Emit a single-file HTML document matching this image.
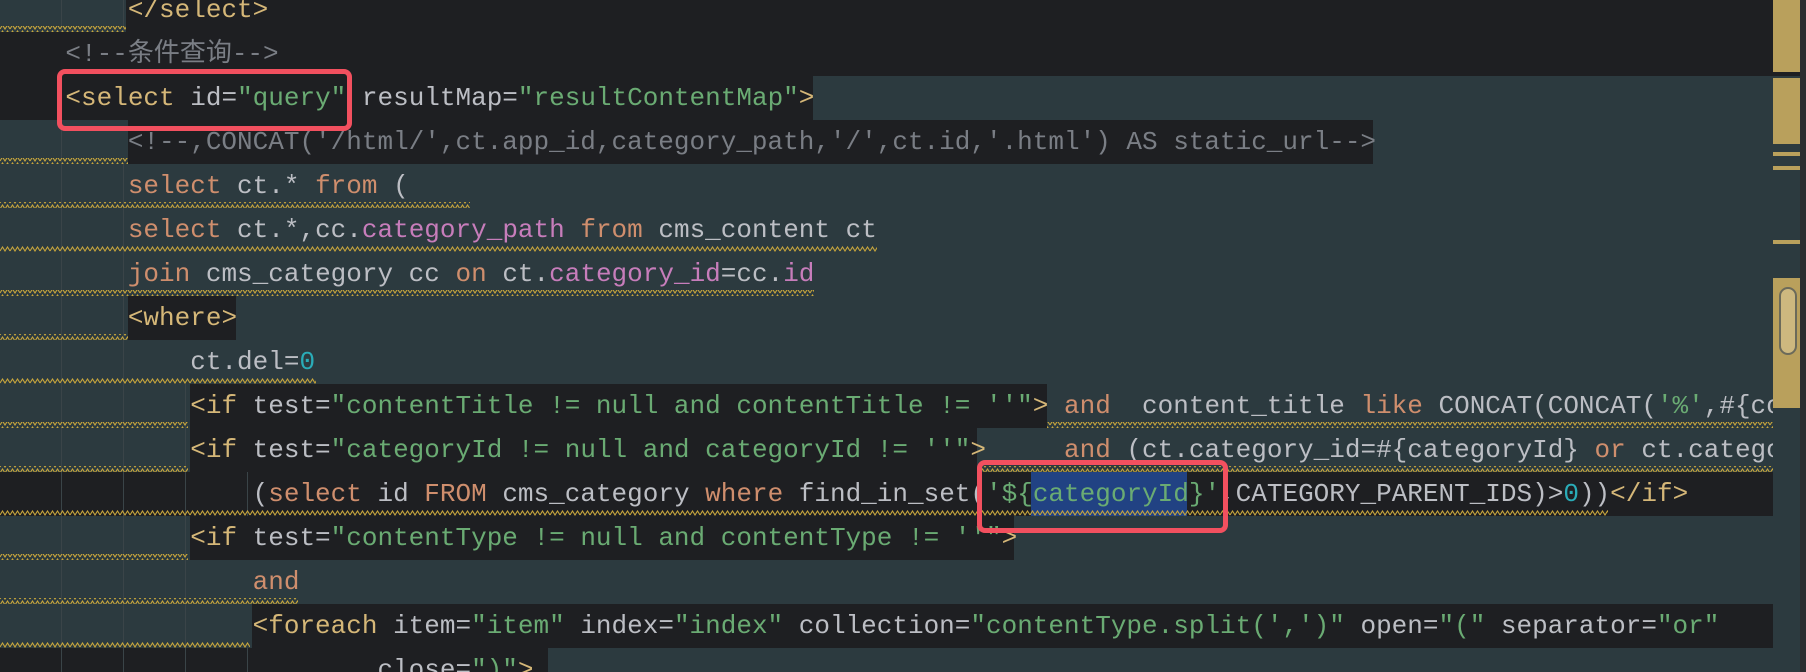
<!DOCTYPE html>
<html><head><meta charset="utf-8"><style>
*{margin:0;padding:0}
body{width:1806px;height:672px;overflow:hidden;background:#1e1f22;position:relative;font-family:"Liberation Mono","Noto Sans CJK SC",monospace;font-size:26px}
.bg{position:absolute;height:44px}
.t{background:#2c3a3f}
.d{background:#1e1f22}
#code{position:absolute;left:0;top:0;width:1800px;height:672px;overflow:hidden}
.ln{position:absolute;left:3px;height:44px;line-height:44px;white-space:pre;color:#bcbec4}
.g{position:absolute;width:1px;background:#3a4448}
.k{color:#d5b778}.s{color:#6aab73}.c{color:#7a7e85}.o{color:#cf8e6d}.p{color:#c77dbb}.n{color:#2aacb8}
.sel{background:#214283}
.box{position:absolute;border:5px solid #f2505f;border-radius:8px}
.m{position:absolute;left:1773px;width:27px;background:#b9a05c}
</style></head><body>
<svg width="0" height="0" style="position:absolute"><defs><pattern id="wv" width="10" height="6" patternUnits="userSpaceOnUse"><path d="M0 5 L2.5 1 L5 5 L7.5 1 L10 5" fill="none" stroke="#c8a63c" stroke-width="1.1"/></pattern></defs></svg>

<div id="code">
<div class="bg t" style="top:-12px;left:0;width:126px"></div>
<div class="bg t" style="top:76px;left:813px;width:987px"></div>
<div class="bg t" style="top:120px;left:0;width:128px"></div>
<div class="bg t" style="top:120px;left:1373px;width:427px"></div>
<div class="bg t" style="top:164px;left:0;width:1800px;height:132px"></div>
<div class="bg t" style="top:296px;left:0;width:128px"></div>
<div class="bg t" style="top:296px;left:236px;width:1564px"></div>
<div class="bg t" style="top:340px;left:0;width:1800px"></div>
<div class="bg t" style="top:384px;left:0;width:190px;height:88px"></div>
<div class="bg t" style="top:384px;left:1047px;width:753px"></div>
<div class="bg t" style="top:428px;left:977px;width:823px"></div>
<div class="bg t" style="top:516px;left:0;width:190px"></div>
<div class="bg t" style="top:516px;left:1014px;width:786px"></div>
<div class="bg t" style="top:560px;left:0;width:1800px"></div>
<div class="bg t" style="top:604px;left:0;width:252px"></div>
<div class="bg t" style="top:648px;left:548px;width:1252px"></div>

<div class="g" style="left:61px;top:-12px;height:44px"></div>
<div class="g" style="left:61px;top:120px;height:552px"></div>
<div class="g" style="left:123px;top:-12px;height:44px"></div>
<div class="g" style="left:123px;top:164px;height:508px"></div>
<div class="g" style="left:185px;top:384px;height:288px"></div>
<div class="g" style="left:247px;top:472px;height:44px"></div>
<div class="g" style="left:247px;top:648px;height:24px"></div>

<div class="bg sel" style="top:472px;left:1031px;width:156px"></div>

<svg style="position:absolute;left:0;top:0" width="1800" height="672">
<g fill="url(#wv)">
<rect x="0" y="26" width="126" height="6"/>
<rect x="0" y="158" width="128" height="6"/>
<rect x="0" y="202" width="470" height="6"/>
<rect x="0" y="246" width="877" height="6"/>
<rect x="0" y="290" width="814" height="6"/>
<rect x="0" y="334" width="128" height="6"/>
<rect x="0" y="378" width="316" height="6"/>
<rect x="0" y="422" width="188" height="6"/>
<rect x="1047" y="422" width="753" height="6"/>
<rect x="0" y="466" width="188" height="6"/>
<rect x="977" y="466" width="823" height="6"/>
<rect x="0" y="510" width="1608" height="6"/>
<rect x="0" y="554" width="188" height="6"/>
<rect x="0" y="598" width="298" height="6"/>
<rect x="0" y="642" width="250" height="6"/>
</g></svg>

<div class="ln" style="top:-12px">        <span class="k">&lt;/select&gt;</span></div>
<div class="ln c" style="top:32px">    &lt;!--条件查询--&gt;</div>
<div class="ln" style="top:76px">    <span class="k">&lt;select</span> id=<span class="s">"query"</span> resultMap=<span class="s">"resultContentMap"</span><span class="k">&gt;</span></div>
<div class="ln c" style="top:120px">        &lt;!--,CONCAT('/html/',ct.app_id,category_path,'/',ct.id,'.html') AS static_url--&gt;</div>
<div class="ln" style="top:164px">        <span class="o">select</span> ct.* <span class="o">from</span> (</div>
<div class="ln" style="top:208px">        <span class="o">select</span> ct.*,cc.<span class="p">category_path</span> <span class="o">from</span> cms_content ct</div>
<div class="ln" style="top:252px">        <span class="o">join</span> cms_category cc <span class="o">on</span> ct.<span class="p">category_id</span>=cc.<span class="p">id</span></div>
<div class="ln" style="top:296px">        <span class="k">&lt;where&gt;</span></div>
<div class="ln" style="top:340px">            ct.del=<span class="n">0</span></div>
<div class="ln" style="top:384px">            <span class="k">&lt;if</span> test=<span class="s">"contentTitle != null and contentTitle != ''"</span><span class="k">&gt;</span> <span class="o">and</span>  content_title <span class="o">like</span> CONCAT(CONCAT(<span class="s">'%'</span>,#{contentTitle}),<span class="s">'%'</span>)</div>
<div class="ln" style="top:428px">            <span class="k">&lt;if</span> test=<span class="s">"categoryId != null and categoryId != ''"</span><span class="k">&gt;</span>     <span class="o">and</span> (ct.category_id=#{categoryId} <span class="o">or</span> ct.category_path like</div>
<div class="ln" style="top:472px">                (<span class="o">select</span> id <span class="o">FROM</span> cms_category <span class="o">where</span> find_in_set(<span class="s">'${categoryId}'</span>,CATEGORY_PARENT_IDS)&gt;<span class="n">0</span>))<span class="k">&lt;/if&gt;</span></div>
<div class="ln" style="top:516px">            <span class="k">&lt;if</span> test=<span class="s">"contentType != null and contentType != ''"</span><span class="k">&gt;</span></div>
<div class="ln" style="top:560px">                <span class="o">and</span></div>
<div class="ln" style="top:604px">                <span class="k">&lt;foreach</span> item=<span class="s">"item"</span> index=<span class="s">"index"</span> collection=<span class="s">"contentType.split(',')"</span> open=<span class="s">"("</span> separator=<span class="s">"or"</span></div>
<div class="ln" style="top:648px">                        close=<span class="s">")"</span><span class="k">&gt;</span></div>
</div>

<div style="position:absolute;left:1773px;top:0;width:33px;height:672px;background:#1e1f22"></div>
<div style="position:absolute;left:1773px;top:76px;width:27px;height:596px;background:#2c3a3f"></div>
<div style="position:absolute;left:1800px;top:0;width:6px;height:672px;background:#2b2d30"></div>
<div class="m" style="top:0;height:72px"></div>
<div class="m" style="top:78px;height:66px"></div>
<div class="m" style="top:152px;height:4px"></div>
<div class="m" style="top:166px;height:4px"></div>
<div class="m" style="top:240px;height:4px"></div>
<div class="m" style="top:278px;height:130px"></div>
<div style="position:absolute;left:1779px;top:287px;width:14px;height:64px;border:2px solid #6b6a5a;border-radius:9px;background:#cdb87f"></div>

<div class="box" style="left:57px;top:69px;width:285px;height:52px"></div>
<div class="box" style="left:977px;top:460px;width:241px;height:63px"></div>
</body></html>
